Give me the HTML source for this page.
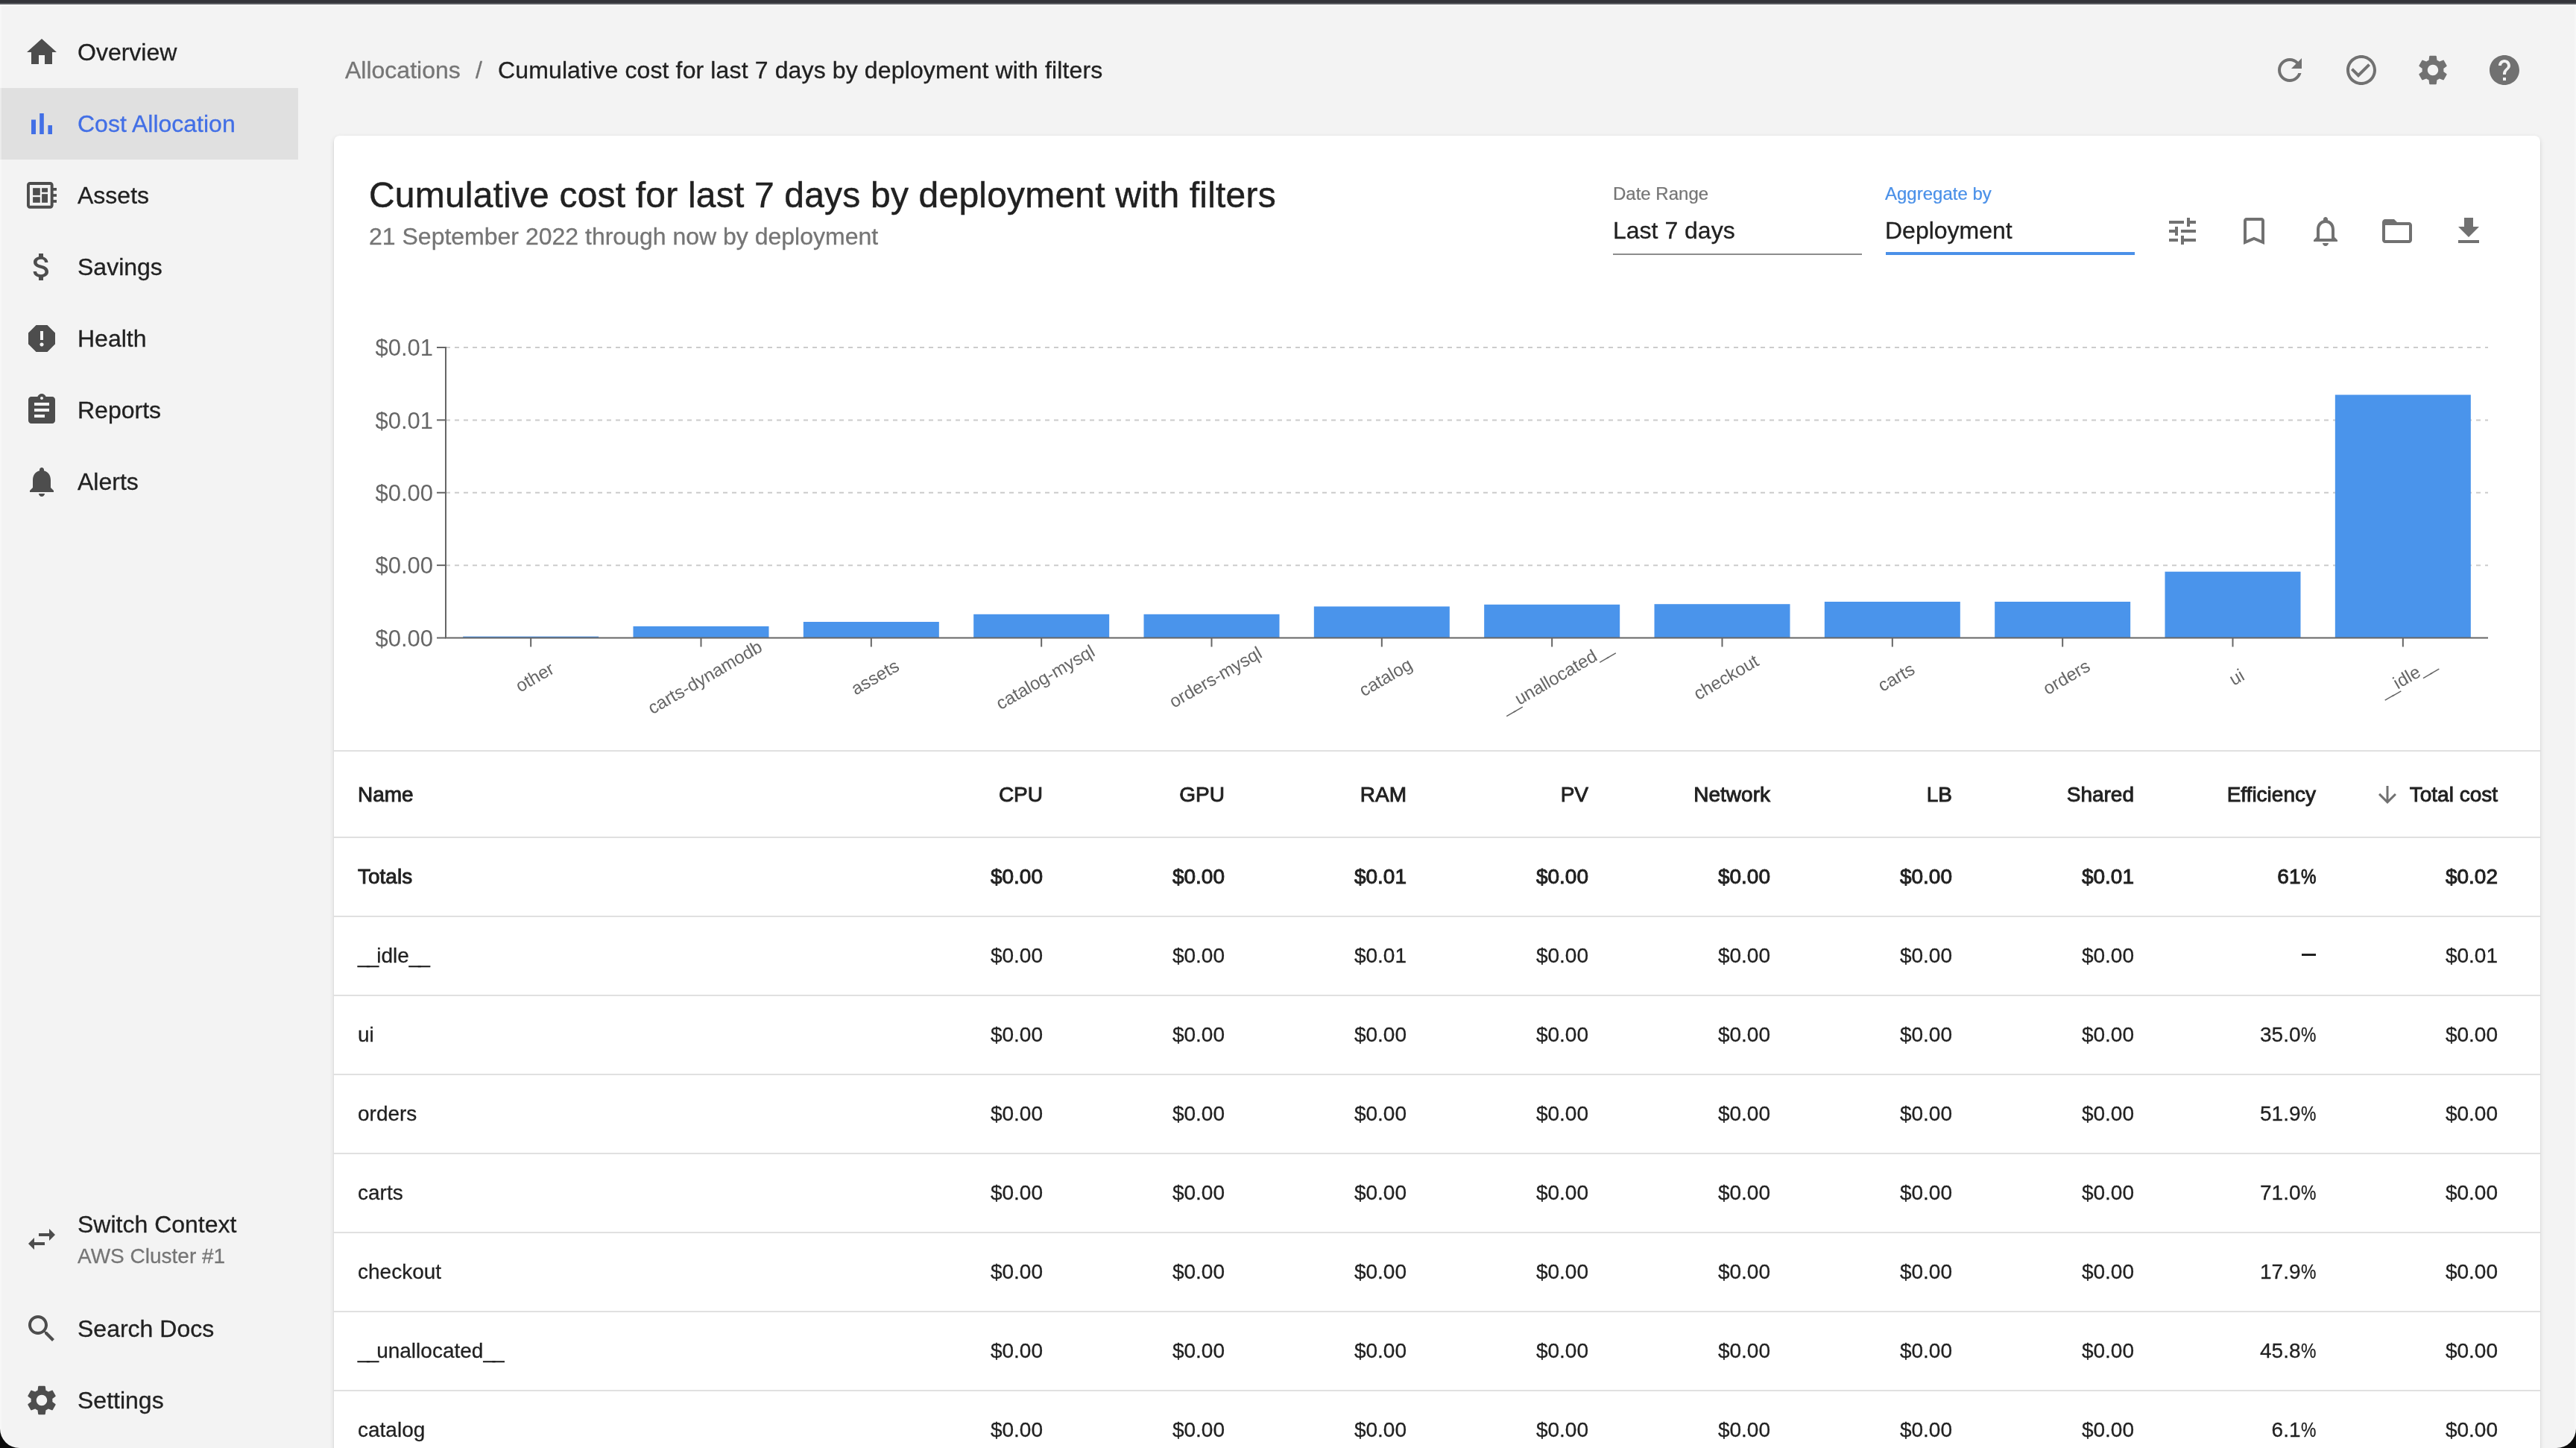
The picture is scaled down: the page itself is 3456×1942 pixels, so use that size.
<!DOCTYPE html><html><head><meta charset="utf-8"><title>Kubecost - Allocations</title><style>
html,body{margin:0;padding:0;} body{width:3456px;height:1942px;overflow:hidden;position:relative;background:#f3f3f3;font-family:"Liberation Sans", sans-serif;will-change:transform;} *{box-sizing:border-box;}
</style></head><body>
<div style="position:absolute;left:0;top:0;width:3456px;height:4px;background:#333439"></div>
<div style="position:absolute;left:0;top:4px;width:3456px;height:2px;background:#5b5d62"></div>
<div style="position:absolute;left:0;top:6px;width:3456px;height:1px;background:#fdfdfd"></div>
<div style="position:absolute;left:0;top:118px;width:400px;height:96px;background:#e0e0e0"></div>
<svg style="position:absolute;left:32px;top:46px" width="48" height="48" viewBox="0 0 24 24"><path fill="#4d4d4d" d="M10 20v-6h4v6h5v-8h3L12 3 2 12h3v8z"/></svg>
<div style="position:absolute;left:104px;top:54.41px;font-size:32px;line-height:32px;color:#212121;font-weight:400;white-space:nowrap;-webkit-text-stroke:0.30px #212121;">Overview</div>
<svg style="position:absolute;left:32px;top:142px" width="48" height="48" viewBox="0 0 24 24"><path fill="#426fe6" d="M5 9.2h3V19H5zM10.6 5h2.8v14h-2.8zm5.6 8H19v6h-2.8z"/></svg>
<div style="position:absolute;left:104px;top:150.41px;font-size:32px;line-height:32px;color:#426fe6;font-weight:400;white-space:nowrap;-webkit-text-stroke:0.30px #426fe6;">Cost Allocation</div>
<svg style="position:absolute;left:32px;top:238px" width="48" height="48" viewBox="0 0 48 48"><rect x="5.95" y="8.05" width="31.7" height="31.7" rx="2.2" fill="none" stroke="#4d4d4d" stroke-width="3.9"/><rect x="12.1" y="14.2" width="9.7" height="9.7" fill="#4d4d4d"/><rect x="24.1" y="14.2" width="7.9" height="5.6" fill="#4d4d4d"/><rect x="12.1" y="26.2" width="9.7" height="7.6" fill="#4d4d4d"/><rect x="24.1" y="22.2" width="7.9" height="11.6" fill="#4d4d4d"/><rect x="39" y="14" width="5" height="3.7" fill="#4d4d4d"/><rect x="39" y="22.2" width="5" height="3.6" fill="#4d4d4d"/><rect x="39" y="30.1" width="5" height="3.7" fill="#4d4d4d"/></svg>
<div style="position:absolute;left:104px;top:246.41px;font-size:32px;line-height:32px;color:#212121;font-weight:400;white-space:nowrap;-webkit-text-stroke:0.30px #212121;">Assets</div>
<svg style="position:absolute;left:32px;top:334px" width="48" height="48" viewBox="0 0 24 24"><path fill="#4d4d4d" d="M11.8 10.9c-2.27-.59-3-1.2-3-2.15 0-1.09 1.01-1.85 2.7-1.85 1.78 0 2.44.85 2.5 2.1h2.21c-.07-1.72-1.12-3.3-3.21-3.81V3h-3v2.16c-1.94.42-3.5 1.68-3.5 3.61 0 2.31 1.91 3.46 4.7 4.13 2.5.6 3 1.48 3 2.41 0 .69-.49 1.79-2.7 1.79-2.06 0-2.87-.92-2.98-2.1h-2.2c.12 2.19 1.76 3.42 3.68 3.83V21h3v-2.15c1.95-.37 3.5-1.5 3.5-3.55 0-2.84-2.43-3.81-4.7-4.4z"/></svg>
<div style="position:absolute;left:104px;top:342.41px;font-size:32px;line-height:32px;color:#212121;font-weight:400;white-space:nowrap;-webkit-text-stroke:0.30px #212121;">Savings</div>
<svg style="position:absolute;left:32px;top:430px" width="48" height="48" viewBox="0 0 24 24"><path fill="#4d4d4d" d="M15.73 3H8.27L3 8.27v7.46L8.27 21h7.46L21 15.73V8.27L15.73 3zM12 17.3c-.72 0-1.3-.58-1.3-1.3 0-.72.58-1.3 1.3-1.3.72 0 1.3.58 1.3 1.3 0 .72-.58 1.3-1.3 1.3zm1-4.3h-2V7h2v6z"/></svg>
<div style="position:absolute;left:104px;top:438.41px;font-size:32px;line-height:32px;color:#212121;font-weight:400;white-space:nowrap;-webkit-text-stroke:0.30px #212121;">Health</div>
<svg style="position:absolute;left:32px;top:526px" width="48" height="48" viewBox="0 0 24 24"><path fill="#4d4d4d" d="M19 3h-4.18C14.4 1.84 13.3 1 12 1c-1.3 0-2.4.84-2.82 2H5c-1.1 0-2 .9-2 2v14c0 1.1.9 2 2 2h14c1.1 0 2-.9 2-2V5c0-1.1-.9-2-2-2zm-7 0c.55 0 1 .45 1 1s-.45 1-1 1-1-.45-1-1 .45-1 1-1zm2 14H7v-2h7v2zm3-4H7v-2h10v2zm0-4H7V7h10v2z"/></svg>
<div style="position:absolute;left:104px;top:534.41px;font-size:32px;line-height:32px;color:#212121;font-weight:400;white-space:nowrap;-webkit-text-stroke:0.30px #212121;">Reports</div>
<svg style="position:absolute;left:32px;top:622px" width="48" height="48" viewBox="0 0 24 24"><path fill="#4d4d4d" d="M12 22c1.1 0 2-.9 2-2h-4c0 1.1.89 2 2 2zm6-6v-5c0-3.07-1.64-5.64-4.5-6.32V4c0-.83-.67-1.5-1.5-1.5s-1.5.67-1.5 1.5v.68C7.63 5.36 6 7.92 6 11v5l-2 2v1h16v-1l-2-2z"/></svg>
<div style="position:absolute;left:104px;top:630.41px;font-size:32px;line-height:32px;color:#212121;font-weight:400;white-space:nowrap;-webkit-text-stroke:0.30px #212121;">Alerts</div>
<svg style="position:absolute;left:32px;top:1637.5px" width="48" height="48" viewBox="0 0 24 24"><path fill="#4d4d4d" d="M6.99 11L3 15l3.99 4v-3H14v-2H6.99v-3zM21 9l-3.99-4v3H10v2h7.01v3L21 9z"/></svg>
<div style="position:absolute;left:104px;top:1625.91px;font-size:32px;line-height:32px;color:#212121;font-weight:400;white-space:nowrap;-webkit-text-stroke:0.30px #212121;">Switch Context</div>
<div style="position:absolute;left:104px;top:1671.30px;font-size:28px;line-height:28px;color:#757575;font-weight:400;white-space:nowrap;-webkit-text-stroke:0.26px #757575;">AWS Cluster #1</div>
<svg style="position:absolute;left:32px;top:1757.75px" width="48" height="48" viewBox="0 0 24 24"><path fill="#4d4d4d" d="M15.5 14h-.79l-.28-.27C15.41 12.59 16 11.11 16 9.5 16 5.91 13.09 3 9.5 3S3 5.91 3 9.5 5.91 16 9.5 16c1.61 0 3.09-.59 4.23-1.57l.27.28v.79l5 4.99L20.49 19l-4.99-5zm-6 0C7.01 14 5 11.99 5 9.5S7.01 5 9.5 5 14 7.01 14 9.5 11.99 14 9.5 14z"/></svg>
<div style="position:absolute;left:104px;top:1765.91px;font-size:32px;line-height:32px;color:#212121;font-weight:400;white-space:nowrap;-webkit-text-stroke:0.30px #212121;">Search Docs</div>
<svg style="position:absolute;left:32px;top:1854px" width="48" height="48" viewBox="0 0 24 24"><path fill="#4d4d4d" d="M19.14 12.94c.04-.3.06-.61.06-.94 0-.32-.02-.64-.07-.94l2.03-1.58c.18-.14.23-.41.12-.61l-1.92-3.32c-.12-.22-.37-.29-.59-.22l-2.39.96c-.5-.38-1.03-.7-1.62-.94l-.36-2.54c-.04-.24-.24-.41-.48-.41h-3.84c-.24 0-.43.17-.47.41l-.36 2.54c-.59.24-1.13.57-1.62.94l-2.39-.96c-.22-.08-.47 0-.59.22L2.74 8.87c-.12.21-.08.47.12.61l2.03 1.58c-.05.3-.09.63-.09.94s.02.64.07.94l-2.03 1.58c-.18.14-.23.41-.12.61l1.92 3.32c.12.22.37.29.59.22l2.39-.96c.5.38 1.03.7 1.62.94l.36 2.54c.05.24.24.41.48.41h3.84c.24 0 .44-.17.47-.41l.36-2.54c.59-.24 1.13-.56 1.62-.94l2.39.96c.22.08.47 0 .59-.22l1.92-3.32c.12-.22.07-.47-.12-.61l-2.01-1.58zM12 15.6c-1.98 0-3.6-1.62-3.6-3.6s1.62-3.6 3.6-3.6 3.6 1.62 3.6 3.6-1.62 3.6-3.6 3.6z"/></svg>
<div style="position:absolute;left:104px;top:1861.91px;font-size:32px;line-height:32px;color:#212121;font-weight:400;white-space:nowrap;-webkit-text-stroke:0.30px #212121;">Settings</div>
<div style="position:absolute;left:463px;top:77.61px;font-size:32px;line-height:32px;color:#757575;font-weight:400;white-space:nowrap;-webkit-text-stroke:0.30px #757575;">Allocations</div>
<div style="position:absolute;left:638px;top:77.61px;font-size:32px;line-height:32px;color:#757575;font-weight:400;white-space:nowrap;-webkit-text-stroke:0.30px #757575;">/</div>
<div style="position:absolute;left:668px;top:77.61px;font-size:32px;line-height:32px;color:#212121;font-weight:400;white-space:nowrap;letter-spacing:0.13px;-webkit-text-stroke:0.30px #212121;">Cumulative cost for last 7 days by deployment with filters</div>
<svg style="position:absolute;left:3048px;top:70px" width="48" height="48" viewBox="0 0 24 24"><path fill="#717171" d="M17.65 6.35C16.2 4.9 14.21 4 12 4c-4.42 0-7.99 3.58-7.99 8s3.57 8 7.99 8c3.73 0 6.84-2.55 7.73-6h-2.08c-.82 2.33-3.04 4-5.65 4-3.31 0-6-2.69-6-6s2.69-6 6-6c1.66 0 3.14.69 4.22 1.78L13 11h7V4l-2.35 2.35z"/></svg>
<svg style="position:absolute;left:3144px;top:70px" width="48" height="48" viewBox="0 0 24 24"><path fill="#717171" d="M16.59 7.58L10 14.17l-3.59-3.58L5 12l5 5 8-8zM12 2C6.48 2 2 6.48 2 12s4.48 10 10 10 10-4.48 10-10S17.52 2 12 2zm0 18c-4.42 0-8-3.58-8-8s3.58-8 8-8 8 3.58 8 8-3.58 8-8 8z"/></svg>
<svg style="position:absolute;left:3240px;top:70px" width="48" height="48" viewBox="0 0 24 24"><path fill="#717171" d="M19.14 12.94c.04-.3.06-.61.06-.94 0-.32-.02-.64-.07-.94l2.03-1.58c.18-.14.23-.41.12-.61l-1.92-3.32c-.12-.22-.37-.29-.59-.22l-2.39.96c-.5-.38-1.03-.7-1.62-.94l-.36-2.54c-.04-.24-.24-.41-.48-.41h-3.84c-.24 0-.43.17-.47.41l-.36 2.54c-.59.24-1.13.57-1.62.94l-2.39-.96c-.22-.08-.47 0-.59.22L2.74 8.87c-.12.21-.08.47.12.61l2.03 1.58c-.05.3-.09.63-.09.94s.02.64.07.94l-2.03 1.58c-.18.14-.23.41-.12.61l1.92 3.32c.12.22.37.29.59.22l2.39-.96c.5.38 1.03.7 1.62.94l.36 2.54c.05.24.24.41.48.41h3.84c.24 0 .44-.17.47-.41l.36-2.54c.59-.24 1.13-.56 1.62-.94l2.39.96c.22.08.47 0 .59-.22l1.92-3.32c.12-.22.07-.47-.12-.61l-2.01-1.58zM12 15.6c-1.98 0-3.6-1.62-3.6-3.6s1.62-3.6 3.6-3.6 3.6 1.62 3.6 3.6-1.62 3.6-3.6 3.6z"/></svg>
<svg style="position:absolute;left:3336px;top:70px" width="48" height="48" viewBox="0 0 24 24"><path fill="#717171" d="M12 2C6.48 2 2 6.48 2 12s4.48 10 10 10 10-4.48 10-10S17.52 2 12 2zm1 17h-2v-2h2v2zm2.07-7.75l-.9.92C13.45 12.9 13 13.5 13 15h-2v-.5c0-1.1.45-2.1 1.17-2.83l1.24-1.26c.37-.36.59-.86.59-1.41 0-1.1-.9-2-2-2s-2 .9-2 2H8c0-2.21 1.79-4 4-4s4 1.79 4 4c0 .88-.36 1.68-.93 2.25z"/></svg>
<div style="position:absolute;left:448px;top:182px;width:2960px;height:1900px;background:#fff;border-radius:8px;box-shadow:0 4px 2px -2px rgba(0,0,0,0.2),0 2px 2px 0 rgba(0,0,0,0.14),0 2px 6px 0 rgba(0,0,0,0.12)"></div>
<div style="position:absolute;left:495px;top:238.07px;font-size:48px;line-height:48px;color:#212121;font-weight:400;white-space:nowrap;letter-spacing:0.19px;-webkit-text-stroke:0.45px #212121;">Cumulative cost for last 7 days by deployment with filters</div>
<div style="position:absolute;left:495px;top:301.31px;font-size:32px;line-height:32px;color:#757575;font-weight:400;white-space:nowrap;-webkit-text-stroke:0.30px #757575;">21 September 2022 through now by deployment</div>
<div style="position:absolute;left:2164px;top:248.48px;font-size:24px;line-height:24px;color:#757575;font-weight:400;white-space:nowrap;-webkit-text-stroke:0.22px #757575;">Date Range</div>
<div style="position:absolute;left:2164px;top:292.91px;font-size:32px;line-height:32px;color:#212121;font-weight:400;white-space:nowrap;-webkit-text-stroke:0.30px #212121;">Last 7 days</div>
<div style="position:absolute;left:2164px;top:340px;width:334px;height:2px;background:#8c8c8c"></div>
<div style="position:absolute;left:2529px;top:248.48px;font-size:24px;line-height:24px;color:#4a90e8;font-weight:400;white-space:nowrap;-webkit-text-stroke:0.22px #4a90e8;">Aggregate by</div>
<div style="position:absolute;left:2529px;top:292.91px;font-size:32px;line-height:32px;color:#212121;font-weight:400;white-space:nowrap;-webkit-text-stroke:0.30px #212121;">Deployment</div>
<div style="position:absolute;left:2530px;top:338px;width:334px;height:4px;background:#4a90e8"></div>
<svg style="position:absolute;left:2904px;top:286px" width="48" height="48" viewBox="0 0 24 24"><path fill="#717171" d="M3 17v2h6v-2H3zM3 5v2h10V5H3zm10 16v-2h8v-2h-8v-2h-2v6h2zM7 9v2H3v2h4v2h2V9H7zm14 4v-2H11v2h10zm-6-4h2V7h4V5h-4V3h-2v6z"/></svg>
<svg style="position:absolute;left:3000px;top:286px" width="48" height="48" viewBox="0 0 24 24"><path fill="#717171" d="M17 3H7c-1.1 0-1.99.9-1.99 2L5 21l7-3 7 3V5c0-1.1-.9-2-2-2zm0 15l-5-2.18L7 18V5h10v13z"/></svg>
<svg style="position:absolute;left:3096px;top:286px" width="48" height="48" viewBox="0 0 24 24"><path fill="#717171" d="M12 22c1.1 0 2-.9 2-2h-4c0 1.1.9 2 2 2zm6-6v-5c0-3.07-1.63-5.64-4.5-6.32V4c0-.83-.67-1.5-1.5-1.5s-1.5.67-1.5 1.5v.68C7.64 5.36 6 7.92 6 11v5l-2 2v1h16v-1l-2-2zm-2 1H8v-6c0-2.48 1.51-4.5 4-4.5s4 2.02 4 4.5v6z"/></svg>
<svg style="position:absolute;left:3192px;top:286px" width="48" height="48" viewBox="0 0 24 24"><path fill="#717171" d="M20 6h-8l-2-2H4c-1.1 0-1.99.9-1.99 2L2 18c0 1.1.9 2 2 2h16c1.1 0 2-.9 2-2V8c0-1.1-.9-2-2-2zm0 12H4V8h16v10z"/></svg>
<svg style="position:absolute;left:3288px;top:286px" width="48" height="48" viewBox="0 0 24 24"><path fill="#717171" d="M19 9h-4V3H9v6H5l7 7 7-7zM5 18v2h14v-2H5z"/></svg>
<svg style="position:absolute;left:0;top:0" width="3456" height="1000" viewBox="0 0 3456 1000"><line x1="586" y1="855.5" x2="598" y2="855.5" stroke="#666" stroke-width="2"/><text x="581" y="866.8" text-anchor="end" font-family='"Liberation Sans", sans-serif' font-size="31" fill="#666">$0.00</text><line x1="598" y1="758.125" x2="3338" y2="758.125" stroke="#cccccc" stroke-width="2" stroke-dasharray="6 6"/><line x1="586" y1="758.125" x2="598" y2="758.125" stroke="#666" stroke-width="2"/><text x="581" y="769.4" text-anchor="end" font-family='"Liberation Sans", sans-serif' font-size="31" fill="#666">$0.00</text><line x1="598" y1="660.75" x2="3338" y2="660.75" stroke="#cccccc" stroke-width="2" stroke-dasharray="6 6"/><line x1="586" y1="660.75" x2="598" y2="660.75" stroke="#666" stroke-width="2"/><text x="581" y="672.0" text-anchor="end" font-family='"Liberation Sans", sans-serif' font-size="31" fill="#666">$0.00</text><line x1="598" y1="563.375" x2="3338" y2="563.375" stroke="#cccccc" stroke-width="2" stroke-dasharray="6 6"/><line x1="586" y1="563.375" x2="598" y2="563.375" stroke="#666" stroke-width="2"/><text x="581" y="574.7" text-anchor="end" font-family='"Liberation Sans", sans-serif' font-size="31" fill="#666">$0.01</text><line x1="598" y1="466.0" x2="3338" y2="466.0" stroke="#cccccc" stroke-width="2" stroke-dasharray="6 6"/><line x1="586" y1="466.0" x2="598" y2="466.0" stroke="#666" stroke-width="2"/><text x="581" y="477.3" text-anchor="end" font-family='"Liberation Sans", sans-serif' font-size="31" fill="#666">$0.01</text><rect x="621.17" y="853.6" width="182" height="1.90" fill="#4a94eb"/><rect x="849.50" y="840" width="182" height="15.50" fill="#4a94eb"/><rect x="1077.83" y="834" width="182" height="21.50" fill="#4a94eb"/><rect x="1306.17" y="823.8" width="182" height="31.70" fill="#4a94eb"/><rect x="1534.50" y="823.8" width="182" height="31.70" fill="#4a94eb"/><rect x="1762.83" y="813.4" width="182" height="42.10" fill="#4a94eb"/><rect x="1991.17" y="810.8" width="182" height="44.70" fill="#4a94eb"/><rect x="2219.50" y="810.2" width="182" height="45.30" fill="#4a94eb"/><rect x="2447.83" y="807" width="182" height="48.50" fill="#4a94eb"/><rect x="2676.17" y="807" width="182" height="48.50" fill="#4a94eb"/><rect x="2904.50" y="766.7" width="182" height="88.80" fill="#4a94eb"/><rect x="3132.83" y="529.5" width="182" height="326.00" fill="#4a94eb"/><line x1="712.17" y1="855.5" x2="712.17" y2="867.5" stroke="#666" stroke-width="2"/><text x="717.2" y="908" dy="8.5" text-anchor="middle" transform="rotate(-30 717.2 908)" font-family='"Liberation Sans", sans-serif' font-size="24" fill="#666">other</text><line x1="940.50" y1="855.5" x2="940.50" y2="867.5" stroke="#666" stroke-width="2"/><text x="945.5" y="908" dy="8.5" text-anchor="middle" transform="rotate(-30 945.5 908)" font-family='"Liberation Sans", sans-serif' font-size="24" fill="#666">carts-dynamodb</text><line x1="1168.83" y1="855.5" x2="1168.83" y2="867.5" stroke="#666" stroke-width="2"/><text x="1173.8" y="908" dy="8.5" text-anchor="middle" transform="rotate(-30 1173.8 908)" font-family='"Liberation Sans", sans-serif' font-size="24" fill="#666">assets</text><line x1="1397.17" y1="855.5" x2="1397.17" y2="867.5" stroke="#666" stroke-width="2"/><text x="1402.2" y="908" dy="8.5" text-anchor="middle" transform="rotate(-30 1402.2 908)" font-family='"Liberation Sans", sans-serif' font-size="24" fill="#666">catalog-mysql</text><line x1="1625.50" y1="855.5" x2="1625.50" y2="867.5" stroke="#666" stroke-width="2"/><text x="1630.5" y="908" dy="8.5" text-anchor="middle" transform="rotate(-30 1630.5 908)" font-family='"Liberation Sans", sans-serif' font-size="24" fill="#666">orders-mysql</text><line x1="1853.83" y1="855.5" x2="1853.83" y2="867.5" stroke="#666" stroke-width="2"/><text x="1858.8" y="908" dy="8.5" text-anchor="middle" transform="rotate(-30 1858.8 908)" font-family='"Liberation Sans", sans-serif' font-size="24" fill="#666">catalog</text><line x1="2082.17" y1="855.5" x2="2082.17" y2="867.5" stroke="#666" stroke-width="2"/><text x="2087.2" y="908" dy="8.5" text-anchor="middle" transform="rotate(-30 2087.2 908)" font-family='"Liberation Sans", sans-serif' font-size="24" fill="#666"><tspan letter-spacing="-2.5">_</tspan><tspan letter-spacing="-2.5">_</tspan>unallocated<tspan letter-spacing="-2.5">_</tspan><tspan letter-spacing="-2.5">_</tspan></text><line x1="2310.50" y1="855.5" x2="2310.50" y2="867.5" stroke="#666" stroke-width="2"/><text x="2315.5" y="908" dy="8.5" text-anchor="middle" transform="rotate(-30 2315.5 908)" font-family='"Liberation Sans", sans-serif' font-size="24" fill="#666">checkout</text><line x1="2538.83" y1="855.5" x2="2538.83" y2="867.5" stroke="#666" stroke-width="2"/><text x="2543.8" y="908" dy="8.5" text-anchor="middle" transform="rotate(-30 2543.8 908)" font-family='"Liberation Sans", sans-serif' font-size="24" fill="#666">carts</text><line x1="2767.17" y1="855.5" x2="2767.17" y2="867.5" stroke="#666" stroke-width="2"/><text x="2772.2" y="908" dy="8.5" text-anchor="middle" transform="rotate(-30 2772.2 908)" font-family='"Liberation Sans", sans-serif' font-size="24" fill="#666">orders</text><line x1="2995.50" y1="855.5" x2="2995.50" y2="867.5" stroke="#666" stroke-width="2"/><text x="3000.5" y="908" dy="8.5" text-anchor="middle" transform="rotate(-30 3000.5 908)" font-family='"Liberation Sans", sans-serif' font-size="24" fill="#666">ui</text><line x1="3223.83" y1="855.5" x2="3223.83" y2="867.5" stroke="#666" stroke-width="2"/><text x="3228.8" y="908" dy="8.5" text-anchor="middle" transform="rotate(-30 3228.8 908)" font-family='"Liberation Sans", sans-serif' font-size="24" fill="#666"><tspan letter-spacing="-2.5">_</tspan><tspan letter-spacing="-2.5">_</tspan>idle<tspan letter-spacing="-2.5">_</tspan><tspan letter-spacing="-2.5">_</tspan></text><line x1="598" y1="465" x2="598" y2="855.5" stroke="#666" stroke-width="2"/><line x1="597" y1="855.5" x2="3338" y2="855.5" stroke="#666" stroke-width="2"/></svg>
<div style="position:absolute;left:448px;top:1006px;width:2960px;height:2px;background:#e0e0e0"></div>
<div style="position:absolute;left:480px;top:1051.80px;font-size:28px;line-height:28px;color:#212121;font-weight:400;white-space:nowrap;-webkit-text-stroke:0.9px #212121;">Name</div>
<div style="position:absolute;right:2057px;top:1051.80px;font-size:28px;line-height:28px;color:#212121;font-weight:400;white-space:nowrap;-webkit-text-stroke:0.9px #212121;">CPU</div>
<div style="position:absolute;right:1813px;top:1051.80px;font-size:28px;line-height:28px;color:#212121;font-weight:400;white-space:nowrap;-webkit-text-stroke:0.9px #212121;">GPU</div>
<div style="position:absolute;right:1569px;top:1051.80px;font-size:28px;line-height:28px;color:#212121;font-weight:400;white-space:nowrap;-webkit-text-stroke:0.9px #212121;">RAM</div>
<div style="position:absolute;right:1325px;top:1051.80px;font-size:28px;line-height:28px;color:#212121;font-weight:400;white-space:nowrap;-webkit-text-stroke:0.9px #212121;">PV</div>
<div style="position:absolute;right:1081px;top:1051.80px;font-size:28px;line-height:28px;color:#212121;font-weight:400;white-space:nowrap;-webkit-text-stroke:0.9px #212121;">Network</div>
<div style="position:absolute;right:837px;top:1051.80px;font-size:28px;line-height:28px;color:#212121;font-weight:400;white-space:nowrap;-webkit-text-stroke:0.9px #212121;">LB</div>
<div style="position:absolute;right:593px;top:1051.80px;font-size:28px;line-height:28px;color:#212121;font-weight:400;white-space:nowrap;-webkit-text-stroke:0.9px #212121;">Shared</div>
<div style="position:absolute;right:349px;top:1051.80px;font-size:28px;line-height:28px;color:#212121;font-weight:400;white-space:nowrap;-webkit-text-stroke:0.9px #212121;">Efficiency</div>
<div style="position:absolute;right:105px;top:1051.80px;font-size:28px;line-height:28px;color:#212121;font-weight:400;white-space:nowrap;-webkit-text-stroke:0.9px #212121;">Total cost</div>
<svg style="position:absolute;left:3185.4px;top:1048px" width="36" height="36" viewBox="0 0 24 24"><path fill="#717171" d="M20 12l-1.41-1.41L13 16.17V4h-2v12.17l-5.58-5.59L4 12l8 8 8-8z"/></svg>
<div style="position:absolute;left:448px;top:1121.5px;width:2960px;height:2px;background:#e0e0e0"></div>
<div style="position:absolute;left:480px;top:1161.60px;font-size:28px;line-height:28px;color:#212121;font-weight:400;white-space:nowrap;-webkit-text-stroke:0.9px #212121;">Totals</div>
<div style="position:absolute;right:2057px;top:1161.60px;font-size:28px;line-height:28px;color:#212121;font-weight:400;white-space:nowrap;-webkit-text-stroke:0.9px #212121;">$0.00</div>
<div style="position:absolute;right:1813px;top:1161.60px;font-size:28px;line-height:28px;color:#212121;font-weight:400;white-space:nowrap;-webkit-text-stroke:0.9px #212121;">$0.00</div>
<div style="position:absolute;right:1569px;top:1161.60px;font-size:28px;line-height:28px;color:#212121;font-weight:400;white-space:nowrap;-webkit-text-stroke:0.9px #212121;">$0.01</div>
<div style="position:absolute;right:1325px;top:1161.60px;font-size:28px;line-height:28px;color:#212121;font-weight:400;white-space:nowrap;-webkit-text-stroke:0.9px #212121;">$0.00</div>
<div style="position:absolute;right:1081px;top:1161.60px;font-size:28px;line-height:28px;color:#212121;font-weight:400;white-space:nowrap;-webkit-text-stroke:0.9px #212121;">$0.00</div>
<div style="position:absolute;right:837px;top:1161.60px;font-size:28px;line-height:28px;color:#212121;font-weight:400;white-space:nowrap;-webkit-text-stroke:0.9px #212121;">$0.00</div>
<div style="position:absolute;right:593px;top:1161.60px;font-size:28px;line-height:28px;color:#212121;font-weight:400;white-space:nowrap;-webkit-text-stroke:0.9px #212121;">$0.01</div>
<div style="position:absolute;right:349px;top:1161.60px;font-size:28px;line-height:28px;color:#212121;font-weight:400;white-space:nowrap;-webkit-text-stroke:0.9px #212121;">61<span style="display:inline-block;width:20.5px"><span style="display:inline-block;transform:scaleX(0.82);transform-origin:0 0">%</span></span></div>
<div style="position:absolute;right:105px;top:1161.60px;font-size:28px;line-height:28px;color:#212121;font-weight:400;white-space:nowrap;-webkit-text-stroke:0.9px #212121;">$0.02</div>
<div style="position:absolute;left:448px;top:1227.5px;width:2960px;height:2px;background:#e0e0e0"></div>
<div style="position:absolute;left:480px;top:1267.60px;font-size:28px;line-height:28px;color:#212121;font-weight:400;white-space:nowrap;-webkit-text-stroke:0.26px #212121;"><span style="letter-spacing:-3px">_</span><span style="letter-spacing:-3px">_</span>idle<span style="letter-spacing:-3px">_</span><span style="letter-spacing:-3px">_</span></div>
<div style="position:absolute;right:2057px;top:1267.60px;font-size:28px;line-height:28px;color:#212121;font-weight:400;white-space:nowrap;-webkit-text-stroke:0.26px #212121;">$0.00</div>
<div style="position:absolute;right:1813px;top:1267.60px;font-size:28px;line-height:28px;color:#212121;font-weight:400;white-space:nowrap;-webkit-text-stroke:0.26px #212121;">$0.00</div>
<div style="position:absolute;right:1569px;top:1267.60px;font-size:28px;line-height:28px;color:#212121;font-weight:400;white-space:nowrap;-webkit-text-stroke:0.26px #212121;">$0.01</div>
<div style="position:absolute;right:1325px;top:1267.60px;font-size:28px;line-height:28px;color:#212121;font-weight:400;white-space:nowrap;-webkit-text-stroke:0.26px #212121;">$0.00</div>
<div style="position:absolute;right:1081px;top:1267.60px;font-size:28px;line-height:28px;color:#212121;font-weight:400;white-space:nowrap;-webkit-text-stroke:0.26px #212121;">$0.00</div>
<div style="position:absolute;right:837px;top:1267.60px;font-size:28px;line-height:28px;color:#212121;font-weight:400;white-space:nowrap;-webkit-text-stroke:0.26px #212121;">$0.00</div>
<div style="position:absolute;right:593px;top:1267.60px;font-size:28px;line-height:28px;color:#212121;font-weight:400;white-space:nowrap;-webkit-text-stroke:0.26px #212121;">$0.00</div>
<div style="position:absolute;left:3087.5px;top:1279.3px;width:19.5px;height:2.6px;background:#212121"></div>
<div style="position:absolute;right:105px;top:1267.60px;font-size:28px;line-height:28px;color:#212121;font-weight:400;white-space:nowrap;-webkit-text-stroke:0.26px #212121;">$0.01</div>
<div style="position:absolute;left:448px;top:1333.5px;width:2960px;height:2px;background:#e0e0e0"></div>
<div style="position:absolute;left:480px;top:1373.60px;font-size:28px;line-height:28px;color:#212121;font-weight:400;white-space:nowrap;-webkit-text-stroke:0.26px #212121;">ui</div>
<div style="position:absolute;right:2057px;top:1373.60px;font-size:28px;line-height:28px;color:#212121;font-weight:400;white-space:nowrap;-webkit-text-stroke:0.26px #212121;">$0.00</div>
<div style="position:absolute;right:1813px;top:1373.60px;font-size:28px;line-height:28px;color:#212121;font-weight:400;white-space:nowrap;-webkit-text-stroke:0.26px #212121;">$0.00</div>
<div style="position:absolute;right:1569px;top:1373.60px;font-size:28px;line-height:28px;color:#212121;font-weight:400;white-space:nowrap;-webkit-text-stroke:0.26px #212121;">$0.00</div>
<div style="position:absolute;right:1325px;top:1373.60px;font-size:28px;line-height:28px;color:#212121;font-weight:400;white-space:nowrap;-webkit-text-stroke:0.26px #212121;">$0.00</div>
<div style="position:absolute;right:1081px;top:1373.60px;font-size:28px;line-height:28px;color:#212121;font-weight:400;white-space:nowrap;-webkit-text-stroke:0.26px #212121;">$0.00</div>
<div style="position:absolute;right:837px;top:1373.60px;font-size:28px;line-height:28px;color:#212121;font-weight:400;white-space:nowrap;-webkit-text-stroke:0.26px #212121;">$0.00</div>
<div style="position:absolute;right:593px;top:1373.60px;font-size:28px;line-height:28px;color:#212121;font-weight:400;white-space:nowrap;-webkit-text-stroke:0.26px #212121;">$0.00</div>
<div style="position:absolute;right:349px;top:1373.60px;font-size:28px;line-height:28px;color:#212121;font-weight:400;white-space:nowrap;-webkit-text-stroke:0.26px #212121;">35.0<span style="display:inline-block;width:20.5px"><span style="display:inline-block;transform:scaleX(0.82);transform-origin:0 0">%</span></span></div>
<div style="position:absolute;right:105px;top:1373.60px;font-size:28px;line-height:28px;color:#212121;font-weight:400;white-space:nowrap;-webkit-text-stroke:0.26px #212121;">$0.00</div>
<div style="position:absolute;left:448px;top:1439.5px;width:2960px;height:2px;background:#e0e0e0"></div>
<div style="position:absolute;left:480px;top:1479.60px;font-size:28px;line-height:28px;color:#212121;font-weight:400;white-space:nowrap;-webkit-text-stroke:0.26px #212121;">orders</div>
<div style="position:absolute;right:2057px;top:1479.60px;font-size:28px;line-height:28px;color:#212121;font-weight:400;white-space:nowrap;-webkit-text-stroke:0.26px #212121;">$0.00</div>
<div style="position:absolute;right:1813px;top:1479.60px;font-size:28px;line-height:28px;color:#212121;font-weight:400;white-space:nowrap;-webkit-text-stroke:0.26px #212121;">$0.00</div>
<div style="position:absolute;right:1569px;top:1479.60px;font-size:28px;line-height:28px;color:#212121;font-weight:400;white-space:nowrap;-webkit-text-stroke:0.26px #212121;">$0.00</div>
<div style="position:absolute;right:1325px;top:1479.60px;font-size:28px;line-height:28px;color:#212121;font-weight:400;white-space:nowrap;-webkit-text-stroke:0.26px #212121;">$0.00</div>
<div style="position:absolute;right:1081px;top:1479.60px;font-size:28px;line-height:28px;color:#212121;font-weight:400;white-space:nowrap;-webkit-text-stroke:0.26px #212121;">$0.00</div>
<div style="position:absolute;right:837px;top:1479.60px;font-size:28px;line-height:28px;color:#212121;font-weight:400;white-space:nowrap;-webkit-text-stroke:0.26px #212121;">$0.00</div>
<div style="position:absolute;right:593px;top:1479.60px;font-size:28px;line-height:28px;color:#212121;font-weight:400;white-space:nowrap;-webkit-text-stroke:0.26px #212121;">$0.00</div>
<div style="position:absolute;right:349px;top:1479.60px;font-size:28px;line-height:28px;color:#212121;font-weight:400;white-space:nowrap;-webkit-text-stroke:0.26px #212121;">51.9<span style="display:inline-block;width:20.5px"><span style="display:inline-block;transform:scaleX(0.82);transform-origin:0 0">%</span></span></div>
<div style="position:absolute;right:105px;top:1479.60px;font-size:28px;line-height:28px;color:#212121;font-weight:400;white-space:nowrap;-webkit-text-stroke:0.26px #212121;">$0.00</div>
<div style="position:absolute;left:448px;top:1545.5px;width:2960px;height:2px;background:#e0e0e0"></div>
<div style="position:absolute;left:480px;top:1585.60px;font-size:28px;line-height:28px;color:#212121;font-weight:400;white-space:nowrap;-webkit-text-stroke:0.26px #212121;">carts</div>
<div style="position:absolute;right:2057px;top:1585.60px;font-size:28px;line-height:28px;color:#212121;font-weight:400;white-space:nowrap;-webkit-text-stroke:0.26px #212121;">$0.00</div>
<div style="position:absolute;right:1813px;top:1585.60px;font-size:28px;line-height:28px;color:#212121;font-weight:400;white-space:nowrap;-webkit-text-stroke:0.26px #212121;">$0.00</div>
<div style="position:absolute;right:1569px;top:1585.60px;font-size:28px;line-height:28px;color:#212121;font-weight:400;white-space:nowrap;-webkit-text-stroke:0.26px #212121;">$0.00</div>
<div style="position:absolute;right:1325px;top:1585.60px;font-size:28px;line-height:28px;color:#212121;font-weight:400;white-space:nowrap;-webkit-text-stroke:0.26px #212121;">$0.00</div>
<div style="position:absolute;right:1081px;top:1585.60px;font-size:28px;line-height:28px;color:#212121;font-weight:400;white-space:nowrap;-webkit-text-stroke:0.26px #212121;">$0.00</div>
<div style="position:absolute;right:837px;top:1585.60px;font-size:28px;line-height:28px;color:#212121;font-weight:400;white-space:nowrap;-webkit-text-stroke:0.26px #212121;">$0.00</div>
<div style="position:absolute;right:593px;top:1585.60px;font-size:28px;line-height:28px;color:#212121;font-weight:400;white-space:nowrap;-webkit-text-stroke:0.26px #212121;">$0.00</div>
<div style="position:absolute;right:349px;top:1585.60px;font-size:28px;line-height:28px;color:#212121;font-weight:400;white-space:nowrap;-webkit-text-stroke:0.26px #212121;">71.0<span style="display:inline-block;width:20.5px"><span style="display:inline-block;transform:scaleX(0.82);transform-origin:0 0">%</span></span></div>
<div style="position:absolute;right:105px;top:1585.60px;font-size:28px;line-height:28px;color:#212121;font-weight:400;white-space:nowrap;-webkit-text-stroke:0.26px #212121;">$0.00</div>
<div style="position:absolute;left:448px;top:1651.5px;width:2960px;height:2px;background:#e0e0e0"></div>
<div style="position:absolute;left:480px;top:1691.60px;font-size:28px;line-height:28px;color:#212121;font-weight:400;white-space:nowrap;-webkit-text-stroke:0.26px #212121;">checkout</div>
<div style="position:absolute;right:2057px;top:1691.60px;font-size:28px;line-height:28px;color:#212121;font-weight:400;white-space:nowrap;-webkit-text-stroke:0.26px #212121;">$0.00</div>
<div style="position:absolute;right:1813px;top:1691.60px;font-size:28px;line-height:28px;color:#212121;font-weight:400;white-space:nowrap;-webkit-text-stroke:0.26px #212121;">$0.00</div>
<div style="position:absolute;right:1569px;top:1691.60px;font-size:28px;line-height:28px;color:#212121;font-weight:400;white-space:nowrap;-webkit-text-stroke:0.26px #212121;">$0.00</div>
<div style="position:absolute;right:1325px;top:1691.60px;font-size:28px;line-height:28px;color:#212121;font-weight:400;white-space:nowrap;-webkit-text-stroke:0.26px #212121;">$0.00</div>
<div style="position:absolute;right:1081px;top:1691.60px;font-size:28px;line-height:28px;color:#212121;font-weight:400;white-space:nowrap;-webkit-text-stroke:0.26px #212121;">$0.00</div>
<div style="position:absolute;right:837px;top:1691.60px;font-size:28px;line-height:28px;color:#212121;font-weight:400;white-space:nowrap;-webkit-text-stroke:0.26px #212121;">$0.00</div>
<div style="position:absolute;right:593px;top:1691.60px;font-size:28px;line-height:28px;color:#212121;font-weight:400;white-space:nowrap;-webkit-text-stroke:0.26px #212121;">$0.00</div>
<div style="position:absolute;right:349px;top:1691.60px;font-size:28px;line-height:28px;color:#212121;font-weight:400;white-space:nowrap;-webkit-text-stroke:0.26px #212121;">17.9<span style="display:inline-block;width:20.5px"><span style="display:inline-block;transform:scaleX(0.82);transform-origin:0 0">%</span></span></div>
<div style="position:absolute;right:105px;top:1691.60px;font-size:28px;line-height:28px;color:#212121;font-weight:400;white-space:nowrap;-webkit-text-stroke:0.26px #212121;">$0.00</div>
<div style="position:absolute;left:448px;top:1757.5px;width:2960px;height:2px;background:#e0e0e0"></div>
<div style="position:absolute;left:480px;top:1797.60px;font-size:28px;line-height:28px;color:#212121;font-weight:400;white-space:nowrap;-webkit-text-stroke:0.26px #212121;"><span style="letter-spacing:-3px">_</span><span style="letter-spacing:-3px">_</span>unallocated<span style="letter-spacing:-3px">_</span><span style="letter-spacing:-3px">_</span></div>
<div style="position:absolute;right:2057px;top:1797.60px;font-size:28px;line-height:28px;color:#212121;font-weight:400;white-space:nowrap;-webkit-text-stroke:0.26px #212121;">$0.00</div>
<div style="position:absolute;right:1813px;top:1797.60px;font-size:28px;line-height:28px;color:#212121;font-weight:400;white-space:nowrap;-webkit-text-stroke:0.26px #212121;">$0.00</div>
<div style="position:absolute;right:1569px;top:1797.60px;font-size:28px;line-height:28px;color:#212121;font-weight:400;white-space:nowrap;-webkit-text-stroke:0.26px #212121;">$0.00</div>
<div style="position:absolute;right:1325px;top:1797.60px;font-size:28px;line-height:28px;color:#212121;font-weight:400;white-space:nowrap;-webkit-text-stroke:0.26px #212121;">$0.00</div>
<div style="position:absolute;right:1081px;top:1797.60px;font-size:28px;line-height:28px;color:#212121;font-weight:400;white-space:nowrap;-webkit-text-stroke:0.26px #212121;">$0.00</div>
<div style="position:absolute;right:837px;top:1797.60px;font-size:28px;line-height:28px;color:#212121;font-weight:400;white-space:nowrap;-webkit-text-stroke:0.26px #212121;">$0.00</div>
<div style="position:absolute;right:593px;top:1797.60px;font-size:28px;line-height:28px;color:#212121;font-weight:400;white-space:nowrap;-webkit-text-stroke:0.26px #212121;">$0.00</div>
<div style="position:absolute;right:349px;top:1797.60px;font-size:28px;line-height:28px;color:#212121;font-weight:400;white-space:nowrap;-webkit-text-stroke:0.26px #212121;">45.8<span style="display:inline-block;width:20.5px"><span style="display:inline-block;transform:scaleX(0.82);transform-origin:0 0">%</span></span></div>
<div style="position:absolute;right:105px;top:1797.60px;font-size:28px;line-height:28px;color:#212121;font-weight:400;white-space:nowrap;-webkit-text-stroke:0.26px #212121;">$0.00</div>
<div style="position:absolute;left:448px;top:1863.5px;width:2960px;height:2px;background:#e0e0e0"></div>
<div style="position:absolute;left:480px;top:1903.60px;font-size:28px;line-height:28px;color:#212121;font-weight:400;white-space:nowrap;-webkit-text-stroke:0.26px #212121;">catalog</div>
<div style="position:absolute;right:2057px;top:1903.60px;font-size:28px;line-height:28px;color:#212121;font-weight:400;white-space:nowrap;-webkit-text-stroke:0.26px #212121;">$0.00</div>
<div style="position:absolute;right:1813px;top:1903.60px;font-size:28px;line-height:28px;color:#212121;font-weight:400;white-space:nowrap;-webkit-text-stroke:0.26px #212121;">$0.00</div>
<div style="position:absolute;right:1569px;top:1903.60px;font-size:28px;line-height:28px;color:#212121;font-weight:400;white-space:nowrap;-webkit-text-stroke:0.26px #212121;">$0.00</div>
<div style="position:absolute;right:1325px;top:1903.60px;font-size:28px;line-height:28px;color:#212121;font-weight:400;white-space:nowrap;-webkit-text-stroke:0.26px #212121;">$0.00</div>
<div style="position:absolute;right:1081px;top:1903.60px;font-size:28px;line-height:28px;color:#212121;font-weight:400;white-space:nowrap;-webkit-text-stroke:0.26px #212121;">$0.00</div>
<div style="position:absolute;right:837px;top:1903.60px;font-size:28px;line-height:28px;color:#212121;font-weight:400;white-space:nowrap;-webkit-text-stroke:0.26px #212121;">$0.00</div>
<div style="position:absolute;right:593px;top:1903.60px;font-size:28px;line-height:28px;color:#212121;font-weight:400;white-space:nowrap;-webkit-text-stroke:0.26px #212121;">$0.00</div>
<div style="position:absolute;right:349px;top:1903.60px;font-size:28px;line-height:28px;color:#212121;font-weight:400;white-space:nowrap;-webkit-text-stroke:0.26px #212121;">6.1<span style="display:inline-block;width:20.5px"><span style="display:inline-block;transform:scaleX(0.82);transform-origin:0 0">%</span></span></div>
<div style="position:absolute;right:105px;top:1903.60px;font-size:28px;line-height:28px;color:#212121;font-weight:400;white-space:nowrap;-webkit-text-stroke:0.26px #212121;">$0.00</div>
<div style="position:absolute;left:0;top:7px;width:2px;height:1935px;background:rgba(255,255,255,0.35)"></div>
<div style="position:absolute;left:3454px;top:7px;width:2px;height:1935px;background:rgba(255,255,255,0.35)"></div>
<svg style="position:absolute;left:0;top:1916px" width="26" height="26" viewBox="0 0 26 26"><path d="M0 0 V26 H26 A 26 26 0 0 1 0 0 Z" fill="#0b0b0b"/></svg>
<svg style="position:absolute;left:3430px;top:1916px" width="26" height="26" viewBox="0 0 26 26"><path d="M26 0 V26 H0 A 26 26 0 0 0 26 0 Z" fill="#0b0b0b"/></svg>
</body></html>
